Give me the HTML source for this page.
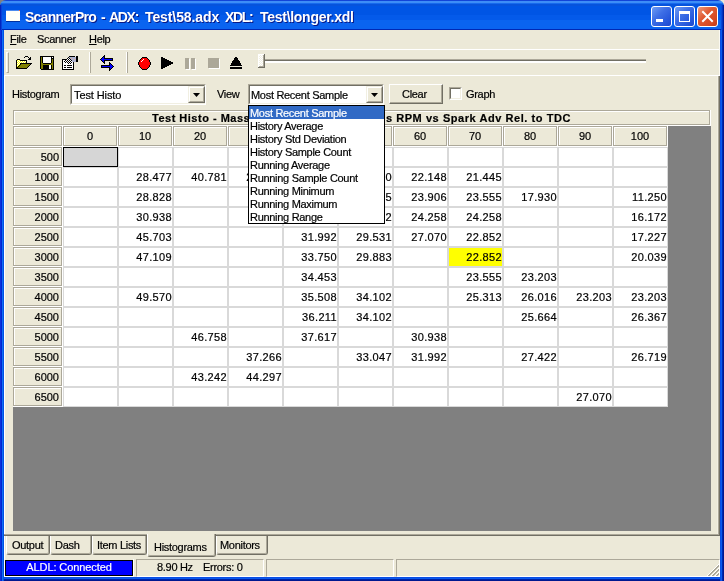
<!DOCTYPE html><html><head><meta charset="utf-8"><style>
*{margin:0;padding:0;box-sizing:border-box}
html,body{width:724px;height:581px;overflow:hidden}
body{position:relative;background:#ECE9D8;font-family:"Liberation Sans",sans-serif;font-size:11px;color:#000}
.t{position:absolute;white-space:nowrap;line-height:13px;letter-spacing:-0.3px;will-change:transform;-webkit-text-stroke:0.2px currentColor}
.n{position:absolute;white-space:nowrap;line-height:13px;will-change:transform;-webkit-text-stroke:0.2px currentColor}
</style></head><body>
<div style="position:absolute;left:0px;top:0px;width:8px;height:8px;background:#808080"></div>
<div style="position:absolute;left:0px;top:0px;width:724px;height:30px;background:linear-gradient(180deg,#1244D8 0px,#1244D8 1px,#3D8DF7 1px,#3D8DF7 3px,#166AEE 3px,#166AEE 4px,#0653DC 4px,#0653DC 6px,#0055E5 6px,#0055E5 15px,#045AEA 15px,#045AEA 20px,#0A64F0 20px,#0A64F0 29px,#0029B5 29px);border-radius:6px 6px 0 0"></div>
<div style="position:absolute;left:0px;top:30px;width:4px;height:551px;background:linear-gradient(90deg,#0A32DD 0,#0A32DD 1px,#0026D0 1px,#0026D0 2px,#1070F5 2px,#1070F5 3px,#0052E5 3px)"></div>
<div style="position:absolute;left:720px;top:30px;width:4px;height:551px;background:linear-gradient(90deg,#0A4EE4 0,#0A4EE4 1px,#0A5AEE 1px,#0A5AEE 2px,#0028B0 2px,#0028B0 3px,#001890 3px)"></div>
<div style="position:absolute;left:4px;top:577px;width:716px;height:4px;background:linear-gradient(180deg,#0A4EE4 0,#0A4EE4 1px,#0A5AEE 1px,#0A5AEE 2px,#0022A8 2px,#0022A8 3px,#001890 3px)"></div>
<div style="position:absolute;left:721px;top:5px;width:3px;height:25px;background:linear-gradient(90deg,#0A48D8 0,#0A48D8 1px,#0036C0 1px,#0036C0 2px,#001C98 2px)"></div>
<div style="position:absolute;left:0px;top:5px;width:2px;height:25px;background:linear-gradient(90deg,#0024C0 0,#0024C0 1px,#0A40D8 1px)"></div>
<div style="position:absolute;left:6px;top:10px;width:14px;height:1px;background:#4A8AEE"></div>
<div style="position:absolute;left:6px;top:11px;width:14px;height:10px;background:#FFFFF8"></div>
<div style="position:absolute;left:6px;top:21px;width:14px;height:1px;background:#0030A0"></div>
<div style="position:absolute;left:19px;top:10px;width:1px;height:1px;background:#F06030"></div>
<div style="position:absolute;left:25px;top:9px;font-weight:bold;font-size:14px;line-height:16px;color:#fff;white-space:nowrap;letter-spacing:-0.75px;will-change:transform;text-shadow:1px 1px #0A1883">ScannerPro</div>
<div style="position:absolute;left:101px;top:9px;font-weight:bold;font-size:14px;line-height:16px;color:#fff;white-space:nowrap;letter-spacing:0px;will-change:transform;text-shadow:1px 1px #0A1883">-</div>
<div style="position:absolute;left:109px;top:9px;font-weight:bold;font-size:14px;line-height:16px;color:#fff;white-space:nowrap;letter-spacing:-1.3px;will-change:transform;text-shadow:1px 1px #0A1883">ADX:</div>
<div style="position:absolute;left:145px;top:9px;font-weight:bold;font-size:14px;line-height:16px;color:#fff;white-space:nowrap;letter-spacing:-0.1px;will-change:transform;text-shadow:1px 1px #0A1883">Test\58.adx</div>
<div style="position:absolute;left:225px;top:9px;font-weight:bold;font-size:14px;line-height:16px;color:#fff;white-space:nowrap;letter-spacing:-1.3px;will-change:transform;text-shadow:1px 1px #0A1883">XDL:</div>
<div style="position:absolute;left:260px;top:9px;font-weight:bold;font-size:14px;line-height:16px;color:#fff;white-space:nowrap;letter-spacing:-0.28px;will-change:transform;text-shadow:1px 1px #0A1883">Test\longer.xdl</div>
<div style="position:absolute;left:651px;top:6px;width:21px;height:21px;border:1px solid #fff;border-radius:3px;background:linear-gradient(135deg,#6E9CF4 0%,#3E6FE6 40%,#2A5BDD 70%,#1C47CF 100%)"></div>
<div style="position:absolute;left:674px;top:6px;width:21px;height:21px;border:1px solid #fff;border-radius:3px;background:linear-gradient(135deg,#6E9CF4 0%,#3E6FE6 40%,#2A5BDD 70%,#1C47CF 100%)"></div>
<div style="position:absolute;left:697px;top:6px;width:21px;height:21px;border:1px solid #fff;border-radius:3px;background:linear-gradient(135deg,#EE9A7C 0%,#E05A32 40%,#D84A22 75%,#C03A18 100%)"></div>
<div style="position:absolute;left:656px;top:19px;width:7px;height:3px;background:#fff"></div>
<div style="position:absolute;left:679px;top:11px;width:11px;height:11px;border:1px solid #fff;border-top:3px solid #fff"></div>
<svg style="position:absolute;left:697px;top:6px" width="21" height="21"><path d="M6 6L15 15M15 6L6 15" stroke="#fff" stroke-width="2" stroke-linecap="square"/></svg>
<div class="t" style="left:10px;top:33px;"><u>F</u>ile</div>
<div class="t" style="left:37px;top:33px;">Scanner</div>
<div class="t" style="left:89px;top:33px;"><u>H</u>elp</div>
<div style="position:absolute;left:4px;top:49px;width:716px;height:1px;background:#fff"></div>
<div style="position:absolute;left:6px;top:52px;width:3px;height:21px;border-left:1px solid #fff;border-top:1px solid #fff;border-right:1px solid #ACA899;border-bottom:1px solid #ACA899"></div>
<div style="position:absolute;left:89px;top:52px;width:1px;height:21px;background:#fff"></div>
<div style="position:absolute;left:90px;top:52px;width:1px;height:21px;background:#ACA899"></div>
<div style="position:absolute;left:126px;top:52px;width:1px;height:21px;background:#fff"></div>
<div style="position:absolute;left:127px;top:52px;width:1px;height:21px;background:#ACA899"></div>
<div style="position:absolute;left:4px;top:75px;width:716px;height:1px;background:#fff"></div>
<svg style="position:absolute;left:16px;top:54px" width="16" height="15" shape-rendering="crispEdges"><rect x="9" y="2" width="3" height="1" fill="#000"/><rect x="8" y="3" width="1" height="1" fill="#000"/><rect x="12" y="3" width="1" height="1" fill="#000"/><rect x="14" y="3" width="1" height="1" fill="#000"/><rect x="13" y="4" width="2" height="1" fill="#000"/><rect x="1" y="5" width="3" height="1" fill="#000"/><rect x="12" y="5" width="3" height="1" fill="#000"/><rect x="0" y="6" width="1" height="1" fill="#000"/><rect x="1" y="6" width="1" height="1" fill="#FFFF00"/><rect x="2" y="6" width="1" height="1" fill="#FFFFFF"/><rect x="3" y="6" width="1" height="1" fill="#FFFF00"/><rect x="4" y="6" width="7" height="1" fill="#000"/><rect x="0" y="7" width="1" height="1" fill="#000"/><rect x="1" y="7" width="1" height="1" fill="#FFFFFF"/><rect x="2" y="7" width="1" height="1" fill="#FFFF00"/><rect x="3" y="7" width="1" height="1" fill="#FFFFFF"/><rect x="4" y="7" width="1" height="1" fill="#FFFF00"/><rect x="5" y="7" width="1" height="1" fill="#FFFFFF"/><rect x="6" y="7" width="1" height="1" fill="#FFFF00"/><rect x="7" y="7" width="1" height="1" fill="#FFFFFF"/><rect x="8" y="7" width="1" height="1" fill="#FFFF00"/><rect x="9" y="7" width="1" height="1" fill="#FFFFFF"/><rect x="10" y="7" width="1" height="1" fill="#000"/><rect x="0" y="8" width="1" height="1" fill="#000"/><rect x="1" y="8" width="1" height="1" fill="#FFFF00"/><rect x="2" y="8" width="1" height="1" fill="#FFFFFF"/><rect x="3" y="8" width="1" height="1" fill="#FFFF00"/><rect x="4" y="8" width="1" height="1" fill="#FFFFFF"/><rect x="5" y="8" width="1" height="1" fill="#FFFF00"/><rect x="6" y="8" width="1" height="1" fill="#FFFFFF"/><rect x="7" y="8" width="1" height="1" fill="#FFFF00"/><rect x="8" y="8" width="1" height="1" fill="#FFFFFF"/><rect x="9" y="8" width="1" height="1" fill="#FFFF00"/><rect x="10" y="8" width="1" height="1" fill="#000"/><rect x="0" y="9" width="1" height="1" fill="#000"/><rect x="1" y="9" width="1" height="1" fill="#FFFFFF"/><rect x="2" y="9" width="1" height="1" fill="#FFFF00"/><rect x="3" y="9" width="1" height="1" fill="#FFFFFF"/><rect x="4" y="9" width="12" height="1" fill="#000"/><rect x="0" y="10" width="1" height="1" fill="#000"/><rect x="1" y="10" width="1" height="1" fill="#FFFF00"/><rect x="2" y="10" width="1" height="1" fill="#FFFFFF"/><rect x="3" y="10" width="1" height="1" fill="#FFFF00"/><rect x="4" y="10" width="1" height="1" fill="#000"/><rect x="5" y="10" width="9" height="1" fill="#808000"/><rect x="14" y="10" width="1" height="1" fill="#000"/><rect x="0" y="11" width="1" height="1" fill="#000"/><rect x="1" y="11" width="1" height="1" fill="#FFFFFF"/><rect x="2" y="11" width="1" height="1" fill="#FFFF00"/><rect x="3" y="11" width="1" height="1" fill="#000"/><rect x="4" y="11" width="9" height="1" fill="#808000"/><rect x="13" y="11" width="1" height="1" fill="#000"/><rect x="0" y="12" width="1" height="1" fill="#000"/><rect x="1" y="12" width="1" height="1" fill="#FFFF00"/><rect x="2" y="12" width="1" height="1" fill="#000"/><rect x="3" y="12" width="9" height="1" fill="#808000"/><rect x="12" y="12" width="1" height="1" fill="#000"/><rect x="0" y="13" width="2" height="1" fill="#000"/><rect x="2" y="13" width="9" height="1" fill="#808000"/><rect x="11" y="13" width="1" height="1" fill="#000"/><rect x="0" y="14" width="11" height="1" fill="#000"/></svg>
<svg style="position:absolute;left:39px;top:54px" width="16" height="16" shape-rendering="crispEdges"><rect x="1" y="2" width="14" height="1" fill="#000"/><rect x="1" y="3" width="1" height="1" fill="#000"/><rect x="2" y="3" width="1" height="1" fill="#808000"/><rect x="3" y="3" width="1" height="1" fill="#000"/><rect x="4" y="3" width="8" height="1" fill="#FFFFFF"/><rect x="12" y="3" width="1" height="1" fill="#000"/><rect x="13" y="3" width="1" height="1" fill="#FFFFFF"/><rect x="14" y="3" width="1" height="1" fill="#000"/><rect x="1" y="4" width="1" height="1" fill="#000"/><rect x="2" y="4" width="1" height="1" fill="#808000"/><rect x="3" y="4" width="1" height="1" fill="#000"/><rect x="4" y="4" width="8" height="1" fill="#FFFFFF"/><rect x="12" y="4" width="3" height="1" fill="#000"/><rect x="1" y="5" width="1" height="1" fill="#000"/><rect x="2" y="5" width="1" height="1" fill="#808000"/><rect x="3" y="5" width="1" height="1" fill="#000"/><rect x="4" y="5" width="8" height="1" fill="#FFFFFF"/><rect x="12" y="5" width="1" height="1" fill="#000"/><rect x="13" y="5" width="1" height="1" fill="#808000"/><rect x="14" y="5" width="1" height="1" fill="#000"/><rect x="1" y="6" width="1" height="1" fill="#000"/><rect x="2" y="6" width="1" height="1" fill="#808000"/><rect x="3" y="6" width="1" height="1" fill="#000"/><rect x="4" y="6" width="8" height="1" fill="#FFFFFF"/><rect x="12" y="6" width="1" height="1" fill="#000"/><rect x="13" y="6" width="1" height="1" fill="#808000"/><rect x="14" y="6" width="1" height="1" fill="#000"/><rect x="1" y="7" width="1" height="1" fill="#000"/><rect x="2" y="7" width="1" height="1" fill="#808000"/><rect x="3" y="7" width="1" height="1" fill="#000"/><rect x="4" y="7" width="8" height="1" fill="#FFFFFF"/><rect x="12" y="7" width="1" height="1" fill="#000"/><rect x="13" y="7" width="1" height="1" fill="#808000"/><rect x="14" y="7" width="1" height="1" fill="#000"/><rect x="1" y="8" width="1" height="1" fill="#000"/><rect x="2" y="8" width="1" height="1" fill="#808000"/><rect x="3" y="8" width="1" height="1" fill="#000"/><rect x="4" y="8" width="8" height="1" fill="#FFFFFF"/><rect x="12" y="8" width="1" height="1" fill="#000"/><rect x="13" y="8" width="1" height="1" fill="#808000"/><rect x="14" y="8" width="1" height="1" fill="#000"/><rect x="1" y="9" width="1" height="1" fill="#000"/><rect x="2" y="9" width="2" height="1" fill="#808000"/><rect x="4" y="9" width="8" height="1" fill="#000"/><rect x="12" y="9" width="2" height="1" fill="#808000"/><rect x="14" y="9" width="1" height="1" fill="#000"/><rect x="1" y="10" width="1" height="1" fill="#000"/><rect x="2" y="10" width="12" height="1" fill="#808000"/><rect x="14" y="10" width="1" height="1" fill="#000"/><rect x="1" y="11" width="1" height="1" fill="#000"/><rect x="2" y="11" width="2" height="1" fill="#808000"/><rect x="4" y="11" width="6" height="1" fill="#000"/><rect x="10" y="11" width="2" height="1" fill="#FFFFFF"/><rect x="12" y="11" width="1" height="1" fill="#000"/><rect x="13" y="11" width="1" height="1" fill="#808000"/><rect x="14" y="11" width="1" height="1" fill="#000"/><rect x="1" y="12" width="1" height="1" fill="#000"/><rect x="2" y="12" width="2" height="1" fill="#808000"/><rect x="4" y="12" width="6" height="1" fill="#000"/><rect x="10" y="12" width="2" height="1" fill="#FFFFFF"/><rect x="12" y="12" width="1" height="1" fill="#000"/><rect x="13" y="12" width="1" height="1" fill="#808000"/><rect x="14" y="12" width="1" height="1" fill="#000"/><rect x="1" y="13" width="1" height="1" fill="#000"/><rect x="2" y="13" width="2" height="1" fill="#808000"/><rect x="4" y="13" width="6" height="1" fill="#000"/><rect x="10" y="13" width="2" height="1" fill="#FFFFFF"/><rect x="12" y="13" width="1" height="1" fill="#000"/><rect x="13" y="13" width="1" height="1" fill="#808000"/><rect x="14" y="13" width="1" height="1" fill="#000"/><rect x="1" y="14" width="1" height="1" fill="#000"/><rect x="2" y="14" width="2" height="1" fill="#808000"/><rect x="4" y="14" width="6" height="1" fill="#000"/><rect x="10" y="14" width="2" height="1" fill="#FFFFFF"/><rect x="12" y="14" width="1" height="1" fill="#000"/><rect x="13" y="14" width="1" height="1" fill="#808000"/><rect x="14" y="14" width="1" height="1" fill="#000"/><rect x="2" y="15" width="13" height="1" fill="#000"/></svg>
<svg style="position:absolute;left:61px;top:55px" width="18" height="15" shape-rendering="crispEdges"><rect x="8" y="1" width="6" height="1" fill="#000"/><rect x="15" y="1" width="2" height="1" fill="#000"/><rect x="7" y="2" width="1" height="1" fill="#000"/><rect x="8" y="2" width="7" height="1" fill="#ADB3CF"/><rect x="15" y="2" width="2" height="1" fill="#000"/><rect x="6" y="3" width="1" height="1" fill="#000"/><rect x="7" y="3" width="1" height="1" fill="#FFFFFF"/><rect x="8" y="3" width="1" height="1" fill="#000"/><rect x="9" y="3" width="1" height="1" fill="#ADB3CF"/><rect x="10" y="3" width="1" height="1" fill="#E8A890"/><rect x="11" y="3" width="4" height="1" fill="#ADB3CF"/><rect x="15" y="3" width="2" height="1" fill="#000"/><rect x="1" y="4" width="5" height="1" fill="#000"/><rect x="6" y="4" width="1" height="1" fill="#FFFFFF"/><rect x="7" y="4" width="1" height="1" fill="#000"/><rect x="8" y="4" width="1" height="1" fill="#FFFFFF"/><rect x="9" y="4" width="1" height="1" fill="#000"/><rect x="10" y="4" width="3" height="1" fill="#ADB3CF"/><rect x="13" y="4" width="1" height="1" fill="#E8A890"/><rect x="14" y="4" width="1" height="1" fill="#ADB3CF"/><rect x="15" y="4" width="2" height="1" fill="#000"/><rect x="1" y="5" width="1" height="1" fill="#000"/><rect x="2" y="5" width="2" height="1" fill="#FFFFFF"/><rect x="4" y="5" width="1" height="1" fill="#000"/><rect x="5" y="5" width="1" height="1" fill="#FFFFFF"/><rect x="6" y="5" width="1" height="1" fill="#000"/><rect x="7" y="5" width="1" height="1" fill="#FFFFFF"/><rect x="8" y="5" width="1" height="1" fill="#000"/><rect x="9" y="5" width="1" height="1" fill="#FFFFFF"/><rect x="10" y="5" width="1" height="1" fill="#000"/><rect x="11" y="5" width="4" height="1" fill="#ADB3CF"/><rect x="15" y="5" width="2" height="1" fill="#000"/><rect x="1" y="6" width="1" height="1" fill="#000"/><rect x="2" y="6" width="1" height="1" fill="#FFFFFF"/><rect x="3" y="6" width="1" height="1" fill="#000"/><rect x="4" y="6" width="1" height="1" fill="#FFFFFF"/><rect x="5" y="6" width="1" height="1" fill="#000"/><rect x="6" y="6" width="1" height="1" fill="#FFFFFF"/><rect x="7" y="6" width="1" height="1" fill="#000"/><rect x="8" y="6" width="1" height="1" fill="#FFFFFF"/><rect x="9" y="6" width="1" height="1" fill="#000"/><rect x="10" y="6" width="1" height="1" fill="#FFFFFF"/><rect x="11" y="6" width="4" height="1" fill="#ADB3CF"/><rect x="15" y="6" width="2" height="1" fill="#000"/><rect x="1" y="7" width="1" height="1" fill="#000"/><rect x="2" y="7" width="2" height="1" fill="#FFFFFF"/><rect x="4" y="7" width="1" height="1" fill="#000"/><rect x="5" y="7" width="1" height="1" fill="#FFFFFF"/><rect x="6" y="7" width="1" height="1" fill="#000"/><rect x="7" y="7" width="1" height="1" fill="#FFFFFF"/><rect x="8" y="7" width="1" height="1" fill="#000"/><rect x="9" y="7" width="1" height="1" fill="#FFFFFF"/><rect x="10" y="7" width="1" height="1" fill="#000"/><rect x="11" y="7" width="1" height="1" fill="#FFFFFF"/><rect x="12" y="7" width="1" height="1" fill="#000"/><rect x="1" y="8" width="1" height="1" fill="#000"/><rect x="2" y="8" width="5" height="1" fill="#FFFFFF"/><rect x="7" y="8" width="1" height="1" fill="#000"/><rect x="8" y="8" width="1" height="1" fill="#FFFFFF"/><rect x="9" y="8" width="1" height="1" fill="#000"/><rect x="10" y="8" width="2" height="1" fill="#FFFFFF"/><rect x="12" y="8" width="1" height="1" fill="#000"/><rect x="1" y="9" width="1" height="1" fill="#000"/><rect x="2" y="9" width="10" height="1" fill="#FFFFFF"/><rect x="12" y="9" width="1" height="1" fill="#000"/><rect x="1" y="10" width="1" height="1" fill="#000"/><rect x="2" y="10" width="1" height="1" fill="#FFFFFF"/><rect x="3" y="10" width="2" height="1" fill="#000"/><rect x="5" y="10" width="1" height="1" fill="#FFFFFF"/><rect x="6" y="10" width="5" height="1" fill="#000"/><rect x="11" y="10" width="1" height="1" fill="#FFFFFF"/><rect x="12" y="10" width="1" height="1" fill="#000"/><rect x="1" y="11" width="1" height="1" fill="#000"/><rect x="2" y="11" width="10" height="1" fill="#FFFFFF"/><rect x="12" y="11" width="1" height="1" fill="#000"/><rect x="1" y="12" width="1" height="1" fill="#000"/><rect x="2" y="12" width="1" height="1" fill="#FFFFFF"/><rect x="3" y="12" width="2" height="1" fill="#000"/><rect x="5" y="12" width="1" height="1" fill="#FFFFFF"/><rect x="6" y="12" width="5" height="1" fill="#000"/><rect x="11" y="12" width="1" height="1" fill="#FFFFFF"/><rect x="12" y="12" width="1" height="1" fill="#000"/><rect x="1" y="13" width="1" height="1" fill="#000"/><rect x="2" y="13" width="10" height="1" fill="#FFFFFF"/><rect x="12" y="13" width="1" height="1" fill="#000"/><rect x="1" y="14" width="12" height="1" fill="#000"/></svg>
<svg style="position:absolute;left:98px;top:53px" width="18" height="18" shape-rendering="crispEdges"><rect x="6" y="2" width="1" height="1" fill="#000"/><rect x="5" y="3" width="2" height="1" fill="#000"/><rect x="4" y="4" width="1" height="1" fill="#000"/><rect x="5" y="4" width="1" height="1" fill="#0000FF"/><rect x="6" y="4" width="1" height="1" fill="#000"/><rect x="3" y="5" width="1" height="1" fill="#000"/><rect x="4" y="5" width="2" height="1" fill="#0000FF"/><rect x="6" y="5" width="9" height="1" fill="#000"/><rect x="2" y="6" width="1" height="1" fill="#000"/><rect x="3" y="6" width="11" height="1" fill="#0000FF"/><rect x="14" y="6" width="1" height="1" fill="#000"/><rect x="3" y="7" width="1" height="1" fill="#000"/><rect x="4" y="7" width="2" height="1" fill="#0000FF"/><rect x="6" y="7" width="9" height="1" fill="#000"/><rect x="4" y="8" width="1" height="1" fill="#000"/><rect x="5" y="8" width="1" height="1" fill="#0000FF"/><rect x="6" y="8" width="1" height="1" fill="#000"/><rect x="5" y="9" width="2" height="1" fill="#000"/><rect x="11" y="9" width="1" height="1" fill="#000"/><rect x="6" y="10" width="1" height="1" fill="#000"/><rect x="11" y="10" width="2" height="1" fill="#000"/><rect x="11" y="11" width="1" height="1" fill="#000"/><rect x="12" y="11" width="1" height="1" fill="#0000FF"/><rect x="13" y="11" width="1" height="1" fill="#000"/><rect x="3" y="12" width="9" height="1" fill="#000"/><rect x="12" y="12" width="2" height="1" fill="#0000FF"/><rect x="14" y="12" width="1" height="1" fill="#000"/><rect x="3" y="13" width="1" height="1" fill="#000"/><rect x="4" y="13" width="11" height="1" fill="#0000FF"/><rect x="15" y="13" width="1" height="1" fill="#000"/><rect x="3" y="14" width="9" height="1" fill="#000"/><rect x="12" y="14" width="2" height="1" fill="#0000FF"/><rect x="14" y="14" width="1" height="1" fill="#000"/><rect x="11" y="15" width="1" height="1" fill="#000"/><rect x="12" y="15" width="1" height="1" fill="#0000FF"/><rect x="13" y="15" width="1" height="1" fill="#000"/><rect x="11" y="16" width="2" height="1" fill="#000"/><rect x="11" y="17" width="1" height="1" fill="#000"/></svg>
<svg style="position:absolute;left:136px;top:55px" width="18" height="15" shape-rendering="crispEdges"><rect x="6" y="2" width="5" height="1" fill="#000"/><rect x="5" y="3" width="1" height="1" fill="#000"/><rect x="6" y="3" width="5" height="1" fill="#FF0000"/><rect x="11" y="3" width="1" height="1" fill="#000"/><rect x="4" y="4" width="1" height="1" fill="#000"/><rect x="5" y="4" width="2" height="1" fill="#FF0000"/><rect x="7" y="4" width="1" height="1" fill="#FFFFFF"/><rect x="8" y="4" width="4" height="1" fill="#FF0000"/><rect x="12" y="4" width="1" height="1" fill="#000"/><rect x="3" y="5" width="1" height="1" fill="#000"/><rect x="4" y="5" width="2" height="1" fill="#FF0000"/><rect x="6" y="5" width="1" height="1" fill="#FFFFFF"/><rect x="7" y="5" width="6" height="1" fill="#FF0000"/><rect x="13" y="5" width="1" height="1" fill="#000"/><rect x="3" y="6" width="1" height="1" fill="#000"/><rect x="4" y="6" width="1" height="1" fill="#FF0000"/><rect x="5" y="6" width="1" height="1" fill="#FFFFFF"/><rect x="6" y="6" width="7" height="1" fill="#FF0000"/><rect x="13" y="6" width="1" height="1" fill="#000"/><rect x="2" y="7" width="1" height="1" fill="#000"/><rect x="3" y="7" width="11" height="1" fill="#FF0000"/><rect x="14" y="7" width="1" height="1" fill="#000"/><rect x="2" y="8" width="1" height="1" fill="#000"/><rect x="3" y="8" width="11" height="1" fill="#FF0000"/><rect x="14" y="8" width="1" height="1" fill="#000"/><rect x="2" y="9" width="1" height="1" fill="#000"/><rect x="3" y="9" width="11" height="1" fill="#FF0000"/><rect x="14" y="9" width="1" height="1" fill="#000"/><rect x="3" y="10" width="1" height="1" fill="#000"/><rect x="4" y="10" width="9" height="1" fill="#FF0000"/><rect x="13" y="10" width="1" height="1" fill="#000"/><rect x="3" y="11" width="1" height="1" fill="#000"/><rect x="4" y="11" width="9" height="1" fill="#FF0000"/><rect x="13" y="11" width="1" height="1" fill="#000"/><rect x="4" y="12" width="1" height="1" fill="#000"/><rect x="5" y="12" width="7" height="1" fill="#FF0000"/><rect x="12" y="12" width="1" height="1" fill="#000"/><rect x="5" y="13" width="1" height="1" fill="#000"/><rect x="6" y="13" width="5" height="1" fill="#FF0000"/><rect x="11" y="13" width="1" height="1" fill="#000"/><rect x="6" y="14" width="5" height="1" fill="#000"/></svg>
<svg style="position:absolute;left:158px;top:55px" width="18" height="14" shape-rendering="crispEdges"><rect x="3" y="2" width="2" height="1" fill="#000"/><rect x="3" y="3" width="4" height="1" fill="#000"/><rect x="3" y="4" width="6" height="1" fill="#000"/><rect x="3" y="5" width="8" height="1" fill="#000"/><rect x="3" y="6" width="10" height="1" fill="#000"/><rect x="3" y="7" width="12" height="1" fill="#000"/><rect x="3" y="8" width="12" height="1" fill="#000"/><rect x="3" y="9" width="10" height="1" fill="#000"/><rect x="3" y="10" width="8" height="1" fill="#000"/><rect x="3" y="11" width="6" height="1" fill="#000"/><rect x="3" y="12" width="4" height="1" fill="#000"/><rect x="3" y="13" width="2" height="1" fill="#000"/></svg>
<svg style="position:absolute;left:180px;top:55px" width="18" height="15" shape-rendering="crispEdges"><rect x="5" y="3" width="4" height="1" fill="#ACA899"/><rect x="11" y="3" width="4" height="1" fill="#ACA899"/><rect x="5" y="4" width="4" height="1" fill="#ACA899"/><rect x="9" y="4" width="1" height="1" fill="#FFFFFF"/><rect x="11" y="4" width="4" height="1" fill="#ACA899"/><rect x="15" y="4" width="1" height="1" fill="#FFFFFF"/><rect x="5" y="5" width="4" height="1" fill="#ACA899"/><rect x="9" y="5" width="1" height="1" fill="#FFFFFF"/><rect x="11" y="5" width="4" height="1" fill="#ACA899"/><rect x="15" y="5" width="1" height="1" fill="#FFFFFF"/><rect x="5" y="6" width="4" height="1" fill="#ACA899"/><rect x="9" y="6" width="1" height="1" fill="#FFFFFF"/><rect x="11" y="6" width="4" height="1" fill="#ACA899"/><rect x="15" y="6" width="1" height="1" fill="#FFFFFF"/><rect x="5" y="7" width="4" height="1" fill="#ACA899"/><rect x="9" y="7" width="1" height="1" fill="#FFFFFF"/><rect x="11" y="7" width="4" height="1" fill="#ACA899"/><rect x="15" y="7" width="1" height="1" fill="#FFFFFF"/><rect x="5" y="8" width="4" height="1" fill="#ACA899"/><rect x="9" y="8" width="1" height="1" fill="#FFFFFF"/><rect x="11" y="8" width="4" height="1" fill="#ACA899"/><rect x="15" y="8" width="1" height="1" fill="#FFFFFF"/><rect x="5" y="9" width="4" height="1" fill="#ACA899"/><rect x="9" y="9" width="1" height="1" fill="#FFFFFF"/><rect x="11" y="9" width="4" height="1" fill="#ACA899"/><rect x="15" y="9" width="1" height="1" fill="#FFFFFF"/><rect x="5" y="10" width="4" height="1" fill="#ACA899"/><rect x="9" y="10" width="1" height="1" fill="#FFFFFF"/><rect x="11" y="10" width="4" height="1" fill="#ACA899"/><rect x="15" y="10" width="1" height="1" fill="#FFFFFF"/><rect x="5" y="11" width="4" height="1" fill="#ACA899"/><rect x="9" y="11" width="1" height="1" fill="#FFFFFF"/><rect x="11" y="11" width="4" height="1" fill="#ACA899"/><rect x="15" y="11" width="1" height="1" fill="#FFFFFF"/><rect x="5" y="12" width="4" height="1" fill="#ACA899"/><rect x="9" y="12" width="1" height="1" fill="#FFFFFF"/><rect x="11" y="12" width="4" height="1" fill="#ACA899"/><rect x="15" y="12" width="1" height="1" fill="#FFFFFF"/><rect x="5" y="13" width="4" height="1" fill="#ACA899"/><rect x="9" y="13" width="1" height="1" fill="#FFFFFF"/><rect x="11" y="13" width="4" height="1" fill="#ACA899"/><rect x="15" y="13" width="1" height="1" fill="#FFFFFF"/><rect x="6" y="14" width="4" height="1" fill="#FFFFFF"/><rect x="12" y="14" width="4" height="1" fill="#FFFFFF"/></svg>
<svg style="position:absolute;left:204px;top:55px" width="18" height="14" shape-rendering="crispEdges"><rect x="4" y="3" width="11" height="1" fill="#ACA899"/><rect x="4" y="4" width="11" height="1" fill="#ACA899"/><rect x="15" y="4" width="1" height="1" fill="#FFFFFF"/><rect x="4" y="5" width="11" height="1" fill="#ACA899"/><rect x="15" y="5" width="1" height="1" fill="#FFFFFF"/><rect x="4" y="6" width="11" height="1" fill="#ACA899"/><rect x="15" y="6" width="1" height="1" fill="#FFFFFF"/><rect x="4" y="7" width="11" height="1" fill="#ACA899"/><rect x="15" y="7" width="1" height="1" fill="#FFFFFF"/><rect x="4" y="8" width="11" height="1" fill="#ACA899"/><rect x="15" y="8" width="1" height="1" fill="#FFFFFF"/><rect x="4" y="9" width="11" height="1" fill="#ACA899"/><rect x="15" y="9" width="1" height="1" fill="#FFFFFF"/><rect x="4" y="10" width="11" height="1" fill="#ACA899"/><rect x="15" y="10" width="1" height="1" fill="#FFFFFF"/><rect x="4" y="11" width="11" height="1" fill="#ACA899"/><rect x="15" y="11" width="1" height="1" fill="#FFFFFF"/><rect x="4" y="12" width="11" height="1" fill="#ACA899"/><rect x="15" y="12" width="1" height="1" fill="#FFFFFF"/><rect x="5" y="13" width="11" height="1" fill="#FFFFFF"/></svg>
<svg style="position:absolute;left:227px;top:54px" width="18" height="15" shape-rendering="crispEdges"><rect x="8" y="3" width="2" height="1" fill="#000"/><rect x="7" y="4" width="4" height="1" fill="#000"/><rect x="7" y="5" width="4" height="1" fill="#000"/><rect x="6" y="6" width="6" height="1" fill="#000"/><rect x="5" y="7" width="8" height="1" fill="#000"/><rect x="5" y="8" width="8" height="1" fill="#000"/><rect x="4" y="9" width="10" height="1" fill="#000"/><rect x="4" y="10" width="10" height="1" fill="#000"/><rect x="3" y="11" width="12" height="1" fill="#000"/><rect x="3" y="13" width="12" height="1" fill="#000"/><rect x="3" y="14" width="12" height="1" fill="#000"/></svg>
<div style="position:absolute;left:4px;top:75px;width:1px;height:502px;background:#fff"></div>
<div class="t" style="left:12px;top:88px;">Histogram</div>
<div style="position:absolute;left:70px;top:84px;width:136px;height:21px;background:#fff;border-top:1px solid #ACA899;border-left:1px solid #ACA899;border-right:1px solid #fff;border-bottom:1px solid #fff"></div>
<div style="position:absolute;left:71px;top:85px;width:134px;height:19px;border-top:1px solid #716F64;border-left:1px solid #716F64;border-right:1px solid #F1EFE2;border-bottom:1px solid #F1EFE2"></div>
<div class="t" style="left:74px;top:89px;letter-spacing:-0.1px">Test Histo</div>
<div style="position:absolute;left:188px;top:86px;width:17px;height:17px;background:#ECE9D8;border-top:1px solid #F1EFE2;border-left:1px solid #F1EFE2;border-right:1px solid #716F64;border-bottom:1px solid #716F64"></div>
<div style="position:absolute;left:189px;top:87px;width:15px;height:15px;border-top:1px solid #fff;border-left:1px solid #fff;border-right:1px solid #ACA899;border-bottom:1px solid #ACA899"></div>
<svg style="position:absolute;left:193px;top:93px" width="7" height="4"><path d="M0 0H7L3.5 4Z" fill="#000"/></svg>
<div class="t" style="left:217px;top:88px;">View</div>
<div style="position:absolute;left:248px;top:84px;width:136px;height:21px;background:#fff;border-top:1px solid #ACA899;border-left:1px solid #ACA899;border-right:1px solid #fff;border-bottom:1px solid #fff"></div>
<div style="position:absolute;left:249px;top:85px;width:134px;height:19px;border-top:1px solid #716F64;border-left:1px solid #716F64;border-right:1px solid #F1EFE2;border-bottom:1px solid #F1EFE2"></div>
<div class="t" style="left:251px;top:89px;">Most Recent Sample</div>
<div style="position:absolute;left:366px;top:86px;width:17px;height:17px;background:#ECE9D8;border-top:1px solid #F1EFE2;border-left:1px solid #F1EFE2;border-right:1px solid #716F64;border-bottom:1px solid #716F64"></div>
<div style="position:absolute;left:367px;top:87px;width:15px;height:15px;border-top:1px solid #fff;border-left:1px solid #fff;border-right:1px solid #ACA899;border-bottom:1px solid #ACA899"></div>
<svg style="position:absolute;left:371px;top:93px" width="7" height="4"><path d="M0 0H7L3.5 4Z" fill="#000"/></svg>
<div style="position:absolute;left:389px;top:84px;width:54px;height:20px;background:#ECE9D8;border-top:1px solid #fff;border-left:1px solid #fff;border-right:1px solid #716F64;border-bottom:1px solid #716F64"></div>
<div style="position:absolute;left:390px;top:85px;width:52px;height:18px;border-right:1px solid #ACA899;border-bottom:1px solid #ACA899"></div>
<div class="t" style="left:402px;top:88px;">Clear</div>
<div style="position:absolute;left:449px;top:87px;width:13px;height:13px;background:#fff;border-top:1px solid #ACA899;border-left:1px solid #ACA899;border-right:1px solid #fff;border-bottom:1px solid #fff"></div>
<div style="position:absolute;left:450px;top:88px;width:11px;height:11px;border-top:1px solid #716F64;border-left:1px solid #716F64;border-right:1px solid #F1EFE2;border-bottom:1px solid #F1EFE2"></div>
<div class="t" style="left:466px;top:88px;">Graph</div>
<div style="position:absolute;left:13px;top:110px;width:698px;height:421px;background:#808080"></div>
<div style="position:absolute;left:13px;top:110px;width:698px;height:16px;background:#fff"></div>
<div style="position:absolute;left:13px;top:126px;width:655px;height:281px;background:#fff"></div>
<div style="position:absolute;left:13px;top:110px;width:697px;height:15px;background:#ECE9D8;border:1px solid #ACA899;box-shadow:inset 1px 1px #fff"></div>
<div class="n" style="left:152px;top:112px;font-weight:bold;letter-spacing:0.5px">Test Histo - Mass Air Flow</div>
<div class="n" style="left:388px;top:112px;width:183px;font-weight:bold;letter-spacing:0.56px;text-align:right;direction:rtl"><span style="direction:ltr;unicode-bidi:bidi-override">s RPM vs Spark Adv Rel. to TDC</span></div>
<div style="position:absolute;left:13px;top:126px;width:49px;height:20px;background:#ECE9D8;border:1px solid #ACA899;box-shadow:inset 1px 1px #fff"></div>
<div style="position:absolute;left:63px;top:126px;width:54px;height:20px;background:#ECE9D8;border:1px solid #ACA899;box-shadow:inset 1px 1px #fff"></div>
<div class="n" style="left:63px;top:130px;width:54px;text-align:center">0</div>
<div style="position:absolute;left:118px;top:126px;width:54px;height:20px;background:#ECE9D8;border:1px solid #ACA899;box-shadow:inset 1px 1px #fff"></div>
<div class="n" style="left:118px;top:130px;width:54px;text-align:center">10</div>
<div style="position:absolute;left:173px;top:126px;width:54px;height:20px;background:#ECE9D8;border:1px solid #ACA899;box-shadow:inset 1px 1px #fff"></div>
<div class="n" style="left:173px;top:130px;width:54px;text-align:center">20</div>
<div style="position:absolute;left:228px;top:126px;width:54px;height:20px;background:#ECE9D8;border:1px solid #ACA899;box-shadow:inset 1px 1px #fff"></div>
<div class="n" style="left:228px;top:130px;width:54px;text-align:center">30</div>
<div style="position:absolute;left:283px;top:126px;width:54px;height:20px;background:#ECE9D8;border:1px solid #ACA899;box-shadow:inset 1px 1px #fff"></div>
<div class="n" style="left:283px;top:130px;width:54px;text-align:center">40</div>
<div style="position:absolute;left:338px;top:126px;width:54px;height:20px;background:#ECE9D8;border:1px solid #ACA899;box-shadow:inset 1px 1px #fff"></div>
<div class="n" style="left:338px;top:130px;width:54px;text-align:center">50</div>
<div style="position:absolute;left:393px;top:126px;width:54px;height:20px;background:#ECE9D8;border:1px solid #ACA899;box-shadow:inset 1px 1px #fff"></div>
<div class="n" style="left:393px;top:130px;width:54px;text-align:center">60</div>
<div style="position:absolute;left:448px;top:126px;width:54px;height:20px;background:#ECE9D8;border:1px solid #ACA899;box-shadow:inset 1px 1px #fff"></div>
<div class="n" style="left:448px;top:130px;width:54px;text-align:center">70</div>
<div style="position:absolute;left:503px;top:126px;width:54px;height:20px;background:#ECE9D8;border:1px solid #ACA899;box-shadow:inset 1px 1px #fff"></div>
<div class="n" style="left:503px;top:130px;width:54px;text-align:center">80</div>
<div style="position:absolute;left:558px;top:126px;width:54px;height:20px;background:#ECE9D8;border:1px solid #ACA899;box-shadow:inset 1px 1px #fff"></div>
<div class="n" style="left:558px;top:130px;width:54px;text-align:center">90</div>
<div style="position:absolute;left:613px;top:126px;width:54px;height:20px;background:#ECE9D8;border:1px solid #ACA899;box-shadow:inset 1px 1px #fff"></div>
<div class="n" style="left:613px;top:130px;width:54px;text-align:center">100</div>
<div style="position:absolute;left:13px;top:147px;width:49px;height:19px;background:#ECE9D8;border:1px solid #ACA899;box-shadow:inset 1px 1px #fff"></div>
<div class="n" style="left:13px;top:151px;width:46px;text-align:right">500</div>
<div style="position:absolute;left:63px;top:147px;width:55px;height:20px;border:1px solid #000;background:#D6D6D6"></div>
<div style="position:absolute;left:118px;top:147px;width:55px;height:20px;border:1px solid #D9D9D9"></div>
<div style="position:absolute;left:173px;top:147px;width:55px;height:20px;border:1px solid #D9D9D9"></div>
<div style="position:absolute;left:228px;top:147px;width:55px;height:20px;border:1px solid #D9D9D9"></div>
<div style="position:absolute;left:283px;top:147px;width:55px;height:20px;border:1px solid #D9D9D9"></div>
<div style="position:absolute;left:338px;top:147px;width:55px;height:20px;border:1px solid #D9D9D9"></div>
<div style="position:absolute;left:393px;top:147px;width:55px;height:20px;border:1px solid #D9D9D9"></div>
<div style="position:absolute;left:448px;top:147px;width:55px;height:20px;border:1px solid #D9D9D9"></div>
<div style="position:absolute;left:503px;top:147px;width:55px;height:20px;border:1px solid #D9D9D9"></div>
<div style="position:absolute;left:558px;top:147px;width:55px;height:20px;border:1px solid #D9D9D9"></div>
<div style="position:absolute;left:613px;top:147px;width:55px;height:20px;border:1px solid #D9D9D9"></div>
<div style="position:absolute;left:13px;top:167px;width:49px;height:19px;background:#ECE9D8;border:1px solid #ACA899;box-shadow:inset 1px 1px #fff"></div>
<div class="n" style="left:13px;top:171px;width:46px;text-align:right">1000</div>
<div style="position:absolute;left:63px;top:167px;width:55px;height:20px;border:1px solid #D9D9D9"></div>
<div style="position:absolute;left:118px;top:167px;width:55px;height:20px;border:1px solid #D9D9D9"></div>
<div class="n" style="left:118px;top:171px;width:54px;text-align:right;letter-spacing:0.35px">28.477</div>
<div style="position:absolute;left:173px;top:167px;width:55px;height:20px;border:1px solid #D9D9D9"></div>
<div class="n" style="left:173px;top:171px;width:54px;text-align:right;letter-spacing:0.35px">40.781</div>
<div style="position:absolute;left:228px;top:167px;width:55px;height:20px;border:1px solid #D9D9D9"></div>
<div class="n" style="left:228px;top:171px;width:54px;text-align:right;letter-spacing:0.35px">27.422</div>
<div style="position:absolute;left:283px;top:167px;width:55px;height:20px;border:1px solid #D9D9D9"></div>
<div style="position:absolute;left:338px;top:167px;width:55px;height:20px;border:1px solid #D9D9D9"></div>
<div class="n" style="left:338px;top:171px;width:54px;text-align:right;letter-spacing:0.35px">33.750</div>
<div style="position:absolute;left:393px;top:167px;width:55px;height:20px;border:1px solid #D9D9D9"></div>
<div class="n" style="left:393px;top:171px;width:54px;text-align:right;letter-spacing:0.35px">22.148</div>
<div style="position:absolute;left:448px;top:167px;width:55px;height:20px;border:1px solid #D9D9D9"></div>
<div class="n" style="left:448px;top:171px;width:54px;text-align:right;letter-spacing:0.35px">21.445</div>
<div style="position:absolute;left:503px;top:167px;width:55px;height:20px;border:1px solid #D9D9D9"></div>
<div style="position:absolute;left:558px;top:167px;width:55px;height:20px;border:1px solid #D9D9D9"></div>
<div style="position:absolute;left:613px;top:167px;width:55px;height:20px;border:1px solid #D9D9D9"></div>
<div style="position:absolute;left:13px;top:187px;width:49px;height:19px;background:#ECE9D8;border:1px solid #ACA899;box-shadow:inset 1px 1px #fff"></div>
<div class="n" style="left:13px;top:191px;width:46px;text-align:right">1500</div>
<div style="position:absolute;left:63px;top:187px;width:55px;height:20px;border:1px solid #D9D9D9"></div>
<div style="position:absolute;left:118px;top:187px;width:55px;height:20px;border:1px solid #D9D9D9"></div>
<div class="n" style="left:118px;top:191px;width:54px;text-align:right;letter-spacing:0.35px">28.828</div>
<div style="position:absolute;left:173px;top:187px;width:55px;height:20px;border:1px solid #D9D9D9"></div>
<div style="position:absolute;left:228px;top:187px;width:55px;height:20px;border:1px solid #D9D9D9"></div>
<div style="position:absolute;left:283px;top:187px;width:55px;height:20px;border:1px solid #D9D9D9"></div>
<div style="position:absolute;left:338px;top:187px;width:55px;height:20px;border:1px solid #D9D9D9"></div>
<div class="n" style="left:338px;top:191px;width:54px;text-align:right;letter-spacing:0.35px">27.305</div>
<div style="position:absolute;left:393px;top:187px;width:55px;height:20px;border:1px solid #D9D9D9"></div>
<div class="n" style="left:393px;top:191px;width:54px;text-align:right;letter-spacing:0.35px">23.906</div>
<div style="position:absolute;left:448px;top:187px;width:55px;height:20px;border:1px solid #D9D9D9"></div>
<div class="n" style="left:448px;top:191px;width:54px;text-align:right;letter-spacing:0.35px">23.555</div>
<div style="position:absolute;left:503px;top:187px;width:55px;height:20px;border:1px solid #D9D9D9"></div>
<div class="n" style="left:503px;top:191px;width:54px;text-align:right;letter-spacing:0.35px">17.930</div>
<div style="position:absolute;left:558px;top:187px;width:55px;height:20px;border:1px solid #D9D9D9"></div>
<div style="position:absolute;left:613px;top:187px;width:55px;height:20px;border:1px solid #D9D9D9"></div>
<div class="n" style="left:613px;top:191px;width:54px;text-align:right;letter-spacing:0.35px">11.250</div>
<div style="position:absolute;left:13px;top:207px;width:49px;height:19px;background:#ECE9D8;border:1px solid #ACA899;box-shadow:inset 1px 1px #fff"></div>
<div class="n" style="left:13px;top:211px;width:46px;text-align:right">2000</div>
<div style="position:absolute;left:63px;top:207px;width:55px;height:20px;border:1px solid #D9D9D9"></div>
<div style="position:absolute;left:118px;top:207px;width:55px;height:20px;border:1px solid #D9D9D9"></div>
<div class="n" style="left:118px;top:211px;width:54px;text-align:right;letter-spacing:0.35px">30.938</div>
<div style="position:absolute;left:173px;top:207px;width:55px;height:20px;border:1px solid #D9D9D9"></div>
<div style="position:absolute;left:228px;top:207px;width:55px;height:20px;border:1px solid #D9D9D9"></div>
<div style="position:absolute;left:283px;top:207px;width:55px;height:20px;border:1px solid #D9D9D9"></div>
<div style="position:absolute;left:338px;top:207px;width:55px;height:20px;border:1px solid #D9D9D9"></div>
<div class="n" style="left:338px;top:211px;width:54px;text-align:right;letter-spacing:0.35px">28.242</div>
<div style="position:absolute;left:393px;top:207px;width:55px;height:20px;border:1px solid #D9D9D9"></div>
<div class="n" style="left:393px;top:211px;width:54px;text-align:right;letter-spacing:0.35px">24.258</div>
<div style="position:absolute;left:448px;top:207px;width:55px;height:20px;border:1px solid #D9D9D9"></div>
<div class="n" style="left:448px;top:211px;width:54px;text-align:right;letter-spacing:0.35px">24.258</div>
<div style="position:absolute;left:503px;top:207px;width:55px;height:20px;border:1px solid #D9D9D9"></div>
<div style="position:absolute;left:558px;top:207px;width:55px;height:20px;border:1px solid #D9D9D9"></div>
<div style="position:absolute;left:613px;top:207px;width:55px;height:20px;border:1px solid #D9D9D9"></div>
<div class="n" style="left:613px;top:211px;width:54px;text-align:right;letter-spacing:0.35px">16.172</div>
<div style="position:absolute;left:13px;top:227px;width:49px;height:19px;background:#ECE9D8;border:1px solid #ACA899;box-shadow:inset 1px 1px #fff"></div>
<div class="n" style="left:13px;top:231px;width:46px;text-align:right">2500</div>
<div style="position:absolute;left:63px;top:227px;width:55px;height:20px;border:1px solid #D9D9D9"></div>
<div style="position:absolute;left:118px;top:227px;width:55px;height:20px;border:1px solid #D9D9D9"></div>
<div class="n" style="left:118px;top:231px;width:54px;text-align:right;letter-spacing:0.35px">45.703</div>
<div style="position:absolute;left:173px;top:227px;width:55px;height:20px;border:1px solid #D9D9D9"></div>
<div style="position:absolute;left:228px;top:227px;width:55px;height:20px;border:1px solid #D9D9D9"></div>
<div style="position:absolute;left:283px;top:227px;width:55px;height:20px;border:1px solid #D9D9D9"></div>
<div class="n" style="left:283px;top:231px;width:54px;text-align:right;letter-spacing:0.35px">31.992</div>
<div style="position:absolute;left:338px;top:227px;width:55px;height:20px;border:1px solid #D9D9D9"></div>
<div class="n" style="left:338px;top:231px;width:54px;text-align:right;letter-spacing:0.35px">29.531</div>
<div style="position:absolute;left:393px;top:227px;width:55px;height:20px;border:1px solid #D9D9D9"></div>
<div class="n" style="left:393px;top:231px;width:54px;text-align:right;letter-spacing:0.35px">27.070</div>
<div style="position:absolute;left:448px;top:227px;width:55px;height:20px;border:1px solid #D9D9D9"></div>
<div class="n" style="left:448px;top:231px;width:54px;text-align:right;letter-spacing:0.35px">22.852</div>
<div style="position:absolute;left:503px;top:227px;width:55px;height:20px;border:1px solid #D9D9D9"></div>
<div style="position:absolute;left:558px;top:227px;width:55px;height:20px;border:1px solid #D9D9D9"></div>
<div style="position:absolute;left:613px;top:227px;width:55px;height:20px;border:1px solid #D9D9D9"></div>
<div class="n" style="left:613px;top:231px;width:54px;text-align:right;letter-spacing:0.35px">17.227</div>
<div style="position:absolute;left:13px;top:247px;width:49px;height:19px;background:#ECE9D8;border:1px solid #ACA899;box-shadow:inset 1px 1px #fff"></div>
<div class="n" style="left:13px;top:251px;width:46px;text-align:right">3000</div>
<div style="position:absolute;left:63px;top:247px;width:55px;height:20px;border:1px solid #D9D9D9"></div>
<div style="position:absolute;left:118px;top:247px;width:55px;height:20px;border:1px solid #D9D9D9"></div>
<div class="n" style="left:118px;top:251px;width:54px;text-align:right;letter-spacing:0.35px">47.109</div>
<div style="position:absolute;left:173px;top:247px;width:55px;height:20px;border:1px solid #D9D9D9"></div>
<div style="position:absolute;left:228px;top:247px;width:55px;height:20px;border:1px solid #D9D9D9"></div>
<div style="position:absolute;left:283px;top:247px;width:55px;height:20px;border:1px solid #D9D9D9"></div>
<div class="n" style="left:283px;top:251px;width:54px;text-align:right;letter-spacing:0.35px">33.750</div>
<div style="position:absolute;left:338px;top:247px;width:55px;height:20px;border:1px solid #D9D9D9"></div>
<div class="n" style="left:338px;top:251px;width:54px;text-align:right;letter-spacing:0.35px">29.883</div>
<div style="position:absolute;left:393px;top:247px;width:55px;height:20px;border:1px solid #D9D9D9"></div>
<div style="position:absolute;left:448px;top:247px;width:55px;height:20px;border:1px solid #D9D9D9;background:#FFFF00"></div>
<div class="n" style="left:448px;top:251px;width:54px;text-align:right;letter-spacing:0.35px">22.852</div>
<div style="position:absolute;left:503px;top:247px;width:55px;height:20px;border:1px solid #D9D9D9"></div>
<div style="position:absolute;left:558px;top:247px;width:55px;height:20px;border:1px solid #D9D9D9"></div>
<div style="position:absolute;left:613px;top:247px;width:55px;height:20px;border:1px solid #D9D9D9"></div>
<div class="n" style="left:613px;top:251px;width:54px;text-align:right;letter-spacing:0.35px">20.039</div>
<div style="position:absolute;left:13px;top:267px;width:49px;height:19px;background:#ECE9D8;border:1px solid #ACA899;box-shadow:inset 1px 1px #fff"></div>
<div class="n" style="left:13px;top:271px;width:46px;text-align:right">3500</div>
<div style="position:absolute;left:63px;top:267px;width:55px;height:20px;border:1px solid #D9D9D9"></div>
<div style="position:absolute;left:118px;top:267px;width:55px;height:20px;border:1px solid #D9D9D9"></div>
<div style="position:absolute;left:173px;top:267px;width:55px;height:20px;border:1px solid #D9D9D9"></div>
<div style="position:absolute;left:228px;top:267px;width:55px;height:20px;border:1px solid #D9D9D9"></div>
<div style="position:absolute;left:283px;top:267px;width:55px;height:20px;border:1px solid #D9D9D9"></div>
<div class="n" style="left:283px;top:271px;width:54px;text-align:right;letter-spacing:0.35px">34.453</div>
<div style="position:absolute;left:338px;top:267px;width:55px;height:20px;border:1px solid #D9D9D9"></div>
<div style="position:absolute;left:393px;top:267px;width:55px;height:20px;border:1px solid #D9D9D9"></div>
<div style="position:absolute;left:448px;top:267px;width:55px;height:20px;border:1px solid #D9D9D9"></div>
<div class="n" style="left:448px;top:271px;width:54px;text-align:right;letter-spacing:0.35px">23.555</div>
<div style="position:absolute;left:503px;top:267px;width:55px;height:20px;border:1px solid #D9D9D9"></div>
<div class="n" style="left:503px;top:271px;width:54px;text-align:right;letter-spacing:0.35px">23.203</div>
<div style="position:absolute;left:558px;top:267px;width:55px;height:20px;border:1px solid #D9D9D9"></div>
<div style="position:absolute;left:613px;top:267px;width:55px;height:20px;border:1px solid #D9D9D9"></div>
<div style="position:absolute;left:13px;top:287px;width:49px;height:19px;background:#ECE9D8;border:1px solid #ACA899;box-shadow:inset 1px 1px #fff"></div>
<div class="n" style="left:13px;top:291px;width:46px;text-align:right">4000</div>
<div style="position:absolute;left:63px;top:287px;width:55px;height:20px;border:1px solid #D9D9D9"></div>
<div style="position:absolute;left:118px;top:287px;width:55px;height:20px;border:1px solid #D9D9D9"></div>
<div class="n" style="left:118px;top:291px;width:54px;text-align:right;letter-spacing:0.35px">49.570</div>
<div style="position:absolute;left:173px;top:287px;width:55px;height:20px;border:1px solid #D9D9D9"></div>
<div style="position:absolute;left:228px;top:287px;width:55px;height:20px;border:1px solid #D9D9D9"></div>
<div style="position:absolute;left:283px;top:287px;width:55px;height:20px;border:1px solid #D9D9D9"></div>
<div class="n" style="left:283px;top:291px;width:54px;text-align:right;letter-spacing:0.35px">35.508</div>
<div style="position:absolute;left:338px;top:287px;width:55px;height:20px;border:1px solid #D9D9D9"></div>
<div class="n" style="left:338px;top:291px;width:54px;text-align:right;letter-spacing:0.35px">34.102</div>
<div style="position:absolute;left:393px;top:287px;width:55px;height:20px;border:1px solid #D9D9D9"></div>
<div style="position:absolute;left:448px;top:287px;width:55px;height:20px;border:1px solid #D9D9D9"></div>
<div class="n" style="left:448px;top:291px;width:54px;text-align:right;letter-spacing:0.35px">25.313</div>
<div style="position:absolute;left:503px;top:287px;width:55px;height:20px;border:1px solid #D9D9D9"></div>
<div class="n" style="left:503px;top:291px;width:54px;text-align:right;letter-spacing:0.35px">26.016</div>
<div style="position:absolute;left:558px;top:287px;width:55px;height:20px;border:1px solid #D9D9D9"></div>
<div class="n" style="left:558px;top:291px;width:54px;text-align:right;letter-spacing:0.35px">23.203</div>
<div style="position:absolute;left:613px;top:287px;width:55px;height:20px;border:1px solid #D9D9D9"></div>
<div class="n" style="left:613px;top:291px;width:54px;text-align:right;letter-spacing:0.35px">23.203</div>
<div style="position:absolute;left:13px;top:307px;width:49px;height:19px;background:#ECE9D8;border:1px solid #ACA899;box-shadow:inset 1px 1px #fff"></div>
<div class="n" style="left:13px;top:311px;width:46px;text-align:right">4500</div>
<div style="position:absolute;left:63px;top:307px;width:55px;height:20px;border:1px solid #D9D9D9"></div>
<div style="position:absolute;left:118px;top:307px;width:55px;height:20px;border:1px solid #D9D9D9"></div>
<div style="position:absolute;left:173px;top:307px;width:55px;height:20px;border:1px solid #D9D9D9"></div>
<div style="position:absolute;left:228px;top:307px;width:55px;height:20px;border:1px solid #D9D9D9"></div>
<div style="position:absolute;left:283px;top:307px;width:55px;height:20px;border:1px solid #D9D9D9"></div>
<div class="n" style="left:283px;top:311px;width:54px;text-align:right;letter-spacing:0.35px">36.211</div>
<div style="position:absolute;left:338px;top:307px;width:55px;height:20px;border:1px solid #D9D9D9"></div>
<div class="n" style="left:338px;top:311px;width:54px;text-align:right;letter-spacing:0.35px">34.102</div>
<div style="position:absolute;left:393px;top:307px;width:55px;height:20px;border:1px solid #D9D9D9"></div>
<div style="position:absolute;left:448px;top:307px;width:55px;height:20px;border:1px solid #D9D9D9"></div>
<div style="position:absolute;left:503px;top:307px;width:55px;height:20px;border:1px solid #D9D9D9"></div>
<div class="n" style="left:503px;top:311px;width:54px;text-align:right;letter-spacing:0.35px">25.664</div>
<div style="position:absolute;left:558px;top:307px;width:55px;height:20px;border:1px solid #D9D9D9"></div>
<div style="position:absolute;left:613px;top:307px;width:55px;height:20px;border:1px solid #D9D9D9"></div>
<div class="n" style="left:613px;top:311px;width:54px;text-align:right;letter-spacing:0.35px">26.367</div>
<div style="position:absolute;left:13px;top:327px;width:49px;height:19px;background:#ECE9D8;border:1px solid #ACA899;box-shadow:inset 1px 1px #fff"></div>
<div class="n" style="left:13px;top:331px;width:46px;text-align:right">5000</div>
<div style="position:absolute;left:63px;top:327px;width:55px;height:20px;border:1px solid #D9D9D9"></div>
<div style="position:absolute;left:118px;top:327px;width:55px;height:20px;border:1px solid #D9D9D9"></div>
<div style="position:absolute;left:173px;top:327px;width:55px;height:20px;border:1px solid #D9D9D9"></div>
<div class="n" style="left:173px;top:331px;width:54px;text-align:right;letter-spacing:0.35px">46.758</div>
<div style="position:absolute;left:228px;top:327px;width:55px;height:20px;border:1px solid #D9D9D9"></div>
<div style="position:absolute;left:283px;top:327px;width:55px;height:20px;border:1px solid #D9D9D9"></div>
<div class="n" style="left:283px;top:331px;width:54px;text-align:right;letter-spacing:0.35px">37.617</div>
<div style="position:absolute;left:338px;top:327px;width:55px;height:20px;border:1px solid #D9D9D9"></div>
<div style="position:absolute;left:393px;top:327px;width:55px;height:20px;border:1px solid #D9D9D9"></div>
<div class="n" style="left:393px;top:331px;width:54px;text-align:right;letter-spacing:0.35px">30.938</div>
<div style="position:absolute;left:448px;top:327px;width:55px;height:20px;border:1px solid #D9D9D9"></div>
<div style="position:absolute;left:503px;top:327px;width:55px;height:20px;border:1px solid #D9D9D9"></div>
<div style="position:absolute;left:558px;top:327px;width:55px;height:20px;border:1px solid #D9D9D9"></div>
<div style="position:absolute;left:613px;top:327px;width:55px;height:20px;border:1px solid #D9D9D9"></div>
<div style="position:absolute;left:13px;top:347px;width:49px;height:19px;background:#ECE9D8;border:1px solid #ACA899;box-shadow:inset 1px 1px #fff"></div>
<div class="n" style="left:13px;top:351px;width:46px;text-align:right">5500</div>
<div style="position:absolute;left:63px;top:347px;width:55px;height:20px;border:1px solid #D9D9D9"></div>
<div style="position:absolute;left:118px;top:347px;width:55px;height:20px;border:1px solid #D9D9D9"></div>
<div style="position:absolute;left:173px;top:347px;width:55px;height:20px;border:1px solid #D9D9D9"></div>
<div style="position:absolute;left:228px;top:347px;width:55px;height:20px;border:1px solid #D9D9D9"></div>
<div class="n" style="left:228px;top:351px;width:54px;text-align:right;letter-spacing:0.35px">37.266</div>
<div style="position:absolute;left:283px;top:347px;width:55px;height:20px;border:1px solid #D9D9D9"></div>
<div style="position:absolute;left:338px;top:347px;width:55px;height:20px;border:1px solid #D9D9D9"></div>
<div class="n" style="left:338px;top:351px;width:54px;text-align:right;letter-spacing:0.35px">33.047</div>
<div style="position:absolute;left:393px;top:347px;width:55px;height:20px;border:1px solid #D9D9D9"></div>
<div class="n" style="left:393px;top:351px;width:54px;text-align:right;letter-spacing:0.35px">31.992</div>
<div style="position:absolute;left:448px;top:347px;width:55px;height:20px;border:1px solid #D9D9D9"></div>
<div style="position:absolute;left:503px;top:347px;width:55px;height:20px;border:1px solid #D9D9D9"></div>
<div class="n" style="left:503px;top:351px;width:54px;text-align:right;letter-spacing:0.35px">27.422</div>
<div style="position:absolute;left:558px;top:347px;width:55px;height:20px;border:1px solid #D9D9D9"></div>
<div style="position:absolute;left:613px;top:347px;width:55px;height:20px;border:1px solid #D9D9D9"></div>
<div class="n" style="left:613px;top:351px;width:54px;text-align:right;letter-spacing:0.35px">26.719</div>
<div style="position:absolute;left:13px;top:367px;width:49px;height:19px;background:#ECE9D8;border:1px solid #ACA899;box-shadow:inset 1px 1px #fff"></div>
<div class="n" style="left:13px;top:371px;width:46px;text-align:right">6000</div>
<div style="position:absolute;left:63px;top:367px;width:55px;height:20px;border:1px solid #D9D9D9"></div>
<div style="position:absolute;left:118px;top:367px;width:55px;height:20px;border:1px solid #D9D9D9"></div>
<div style="position:absolute;left:173px;top:367px;width:55px;height:20px;border:1px solid #D9D9D9"></div>
<div class="n" style="left:173px;top:371px;width:54px;text-align:right;letter-spacing:0.35px">43.242</div>
<div style="position:absolute;left:228px;top:367px;width:55px;height:20px;border:1px solid #D9D9D9"></div>
<div class="n" style="left:228px;top:371px;width:54px;text-align:right;letter-spacing:0.35px">44.297</div>
<div style="position:absolute;left:283px;top:367px;width:55px;height:20px;border:1px solid #D9D9D9"></div>
<div style="position:absolute;left:338px;top:367px;width:55px;height:20px;border:1px solid #D9D9D9"></div>
<div style="position:absolute;left:393px;top:367px;width:55px;height:20px;border:1px solid #D9D9D9"></div>
<div style="position:absolute;left:448px;top:367px;width:55px;height:20px;border:1px solid #D9D9D9"></div>
<div style="position:absolute;left:503px;top:367px;width:55px;height:20px;border:1px solid #D9D9D9"></div>
<div style="position:absolute;left:558px;top:367px;width:55px;height:20px;border:1px solid #D9D9D9"></div>
<div style="position:absolute;left:613px;top:367px;width:55px;height:20px;border:1px solid #D9D9D9"></div>
<div style="position:absolute;left:13px;top:387px;width:49px;height:19px;background:#ECE9D8;border:1px solid #ACA899;box-shadow:inset 1px 1px #fff"></div>
<div class="n" style="left:13px;top:391px;width:46px;text-align:right">6500</div>
<div style="position:absolute;left:63px;top:387px;width:55px;height:20px;border:1px solid #D9D9D9"></div>
<div style="position:absolute;left:118px;top:387px;width:55px;height:20px;border:1px solid #D9D9D9"></div>
<div style="position:absolute;left:173px;top:387px;width:55px;height:20px;border:1px solid #D9D9D9"></div>
<div style="position:absolute;left:228px;top:387px;width:55px;height:20px;border:1px solid #D9D9D9"></div>
<div style="position:absolute;left:283px;top:387px;width:55px;height:20px;border:1px solid #D9D9D9"></div>
<div style="position:absolute;left:338px;top:387px;width:55px;height:20px;border:1px solid #D9D9D9"></div>
<div style="position:absolute;left:393px;top:387px;width:55px;height:20px;border:1px solid #D9D9D9"></div>
<div style="position:absolute;left:448px;top:387px;width:55px;height:20px;border:1px solid #D9D9D9"></div>
<div style="position:absolute;left:503px;top:387px;width:55px;height:20px;border:1px solid #D9D9D9"></div>
<div style="position:absolute;left:558px;top:387px;width:55px;height:20px;border:1px solid #D9D9D9"></div>
<div class="n" style="left:558px;top:391px;width:54px;text-align:right;letter-spacing:0.35px">27.070</div>
<div style="position:absolute;left:613px;top:387px;width:55px;height:20px;border:1px solid #D9D9D9"></div>
<div style="position:absolute;left:248px;top:105px;width:137px;height:119px;background:#fff;border:1px solid #000"></div>
<div style="position:absolute;left:249px;top:106px;width:135px;height:13px;background:#316AC5"></div>
<div class="t" style="left:250px;top:107px;color:#fff">Most Recent Sample</div>
<div class="t" style="left:250px;top:120px;color:#000">History Average</div>
<div class="t" style="left:250px;top:133px;color:#000">History Std Deviation</div>
<div class="t" style="left:250px;top:146px;color:#000">History Sample Count</div>
<div class="t" style="left:250px;top:159px;color:#000">Running Average</div>
<div class="t" style="left:250px;top:172px;color:#000">Running Sample Count</div>
<div class="t" style="left:250px;top:185px;color:#000">Running Minimum</div>
<div class="t" style="left:250px;top:198px;color:#000">Running Maximum</div>
<div class="t" style="left:250px;top:211px;color:#000">Running Range</div>
<div style="position:absolute;left:265px;top:59px;width:381px;height:1px;background:#ACA899"></div>
<div style="position:absolute;left:265px;top:60px;width:381px;height:1px;background:#716F64"></div>
<div style="position:absolute;left:265px;top:61px;width:381px;height:2px;background:#fff"></div>
<svg style="position:absolute;left:258px;top:54px" width="7" height="14" shape-rendering="crispEdges"><rect x="0" y="0" width="6" height="1" fill="#FFFFFF"/><rect x="6" y="0" width="1" height="1" fill="#716F64"/><rect x="0" y="1" width="2" height="1" fill="#FFFFFF"/><rect x="2" y="1" width="1" height="1" fill="#F1EFE2"/><rect x="3" y="1" width="1" height="1" fill="#FFFFFF"/><rect x="4" y="1" width="1" height="1" fill="#F1EFE2"/><rect x="5" y="1" width="1" height="1" fill="#ACA899"/><rect x="6" y="1" width="1" height="1" fill="#716F64"/><rect x="0" y="2" width="1" height="1" fill="#FFFFFF"/><rect x="1" y="2" width="1" height="1" fill="#F1EFE2"/><rect x="2" y="2" width="1" height="1" fill="#FFFFFF"/><rect x="3" y="2" width="1" height="1" fill="#F1EFE2"/><rect x="4" y="2" width="1" height="1" fill="#FFFFFF"/><rect x="5" y="2" width="1" height="1" fill="#ACA899"/><rect x="6" y="2" width="1" height="1" fill="#716F64"/><rect x="0" y="3" width="2" height="1" fill="#FFFFFF"/><rect x="2" y="3" width="1" height="1" fill="#F1EFE2"/><rect x="3" y="3" width="1" height="1" fill="#FFFFFF"/><rect x="4" y="3" width="1" height="1" fill="#F1EFE2"/><rect x="5" y="3" width="1" height="1" fill="#ACA899"/><rect x="6" y="3" width="1" height="1" fill="#716F64"/><rect x="0" y="4" width="1" height="1" fill="#FFFFFF"/><rect x="1" y="4" width="1" height="1" fill="#F1EFE2"/><rect x="2" y="4" width="1" height="1" fill="#FFFFFF"/><rect x="3" y="4" width="1" height="1" fill="#F1EFE2"/><rect x="4" y="4" width="1" height="1" fill="#FFFFFF"/><rect x="5" y="4" width="1" height="1" fill="#ACA899"/><rect x="6" y="4" width="1" height="1" fill="#716F64"/><rect x="0" y="5" width="2" height="1" fill="#FFFFFF"/><rect x="2" y="5" width="1" height="1" fill="#F1EFE2"/><rect x="3" y="5" width="1" height="1" fill="#FFFFFF"/><rect x="4" y="5" width="1" height="1" fill="#F1EFE2"/><rect x="5" y="5" width="1" height="1" fill="#ACA899"/><rect x="6" y="5" width="1" height="1" fill="#716F64"/><rect x="0" y="6" width="1" height="1" fill="#FFFFFF"/><rect x="1" y="6" width="1" height="1" fill="#F1EFE2"/><rect x="2" y="6" width="1" height="1" fill="#FFFFFF"/><rect x="3" y="6" width="1" height="1" fill="#F1EFE2"/><rect x="4" y="6" width="1" height="1" fill="#FFFFFF"/><rect x="5" y="6" width="1" height="1" fill="#ACA899"/><rect x="6" y="6" width="1" height="1" fill="#716F64"/><rect x="0" y="7" width="2" height="1" fill="#FFFFFF"/><rect x="2" y="7" width="1" height="1" fill="#F1EFE2"/><rect x="3" y="7" width="1" height="1" fill="#FFFFFF"/><rect x="4" y="7" width="1" height="1" fill="#F1EFE2"/><rect x="5" y="7" width="1" height="1" fill="#ACA899"/><rect x="6" y="7" width="1" height="1" fill="#716F64"/><rect x="0" y="8" width="1" height="1" fill="#FFFFFF"/><rect x="1" y="8" width="1" height="1" fill="#F1EFE2"/><rect x="2" y="8" width="1" height="1" fill="#FFFFFF"/><rect x="3" y="8" width="1" height="1" fill="#F1EFE2"/><rect x="4" y="8" width="1" height="1" fill="#FFFFFF"/><rect x="5" y="8" width="1" height="1" fill="#ACA899"/><rect x="6" y="8" width="1" height="1" fill="#716F64"/><rect x="0" y="9" width="2" height="1" fill="#FFFFFF"/><rect x="2" y="9" width="1" height="1" fill="#F1EFE2"/><rect x="3" y="9" width="1" height="1" fill="#FFFFFF"/><rect x="4" y="9" width="1" height="1" fill="#F1EFE2"/><rect x="5" y="9" width="1" height="1" fill="#ACA899"/><rect x="6" y="9" width="1" height="1" fill="#716F64"/><rect x="0" y="10" width="1" height="1" fill="#FFFFFF"/><rect x="1" y="10" width="1" height="1" fill="#F1EFE2"/><rect x="2" y="10" width="1" height="1" fill="#FFFFFF"/><rect x="3" y="10" width="1" height="1" fill="#F1EFE2"/><rect x="4" y="10" width="1" height="1" fill="#FFFFFF"/><rect x="5" y="10" width="1" height="1" fill="#ACA899"/><rect x="6" y="10" width="1" height="1" fill="#716F64"/><rect x="0" y="11" width="2" height="1" fill="#FFFFFF"/><rect x="2" y="11" width="1" height="1" fill="#F1EFE2"/><rect x="3" y="11" width="1" height="1" fill="#FFFFFF"/><rect x="4" y="11" width="1" height="1" fill="#F1EFE2"/><rect x="5" y="11" width="1" height="1" fill="#ACA899"/><rect x="6" y="11" width="1" height="1" fill="#716F64"/><rect x="0" y="12" width="1" height="1" fill="#FFFFFF"/><rect x="1" y="12" width="5" height="1" fill="#ACA899"/><rect x="6" y="12" width="1" height="1" fill="#716F64"/><rect x="0" y="13" width="7" height="1" fill="#716F64"/></svg>
<div style="position:absolute;left:4px;top:534px;width:716px;height:1px;background:#ACA899"></div>
<div style="position:absolute;left:4px;top:535px;width:716px;height:1px;background:#716F64"></div>
<div style="position:absolute;left:717px;top:76px;width:1px;height:458px;background:#F1EFE2"></div>
<div style="position:absolute;left:718px;top:76px;width:1px;height:459px;background:#ACA899"></div>
<div style="position:absolute;left:719px;top:76px;width:1px;height:460px;background:#716F64"></div>
<div style="position:absolute;left:4px;top:75px;width:716px;height:1px;background:#fff"></div>
<div style="position:absolute;left:719px;top:30px;width:1px;height:45px;background:#FAF9F2"></div>
<div style="position:absolute;left:6px;top:536px;width:44px;height:19px;background:#ECE9D8;border-left:1px solid #fff;border-right:1px solid #716F64;border-bottom:1px solid #716F64;border-radius:0 0 3px 3px"></div>
<div style="position:absolute;left:7px;top:536px;width:42px;height:18px;border-right:1px solid #ACA899;border-bottom:1px solid #ACA899;border-radius:0 0 2px 2px"></div>
<div class="t" style="left:12px;top:539px;">Output</div>
<div style="position:absolute;left:50px;top:536px;width:42px;height:19px;background:#ECE9D8;border-left:1px solid #fff;border-right:1px solid #716F64;border-bottom:1px solid #716F64;border-radius:0 0 3px 3px"></div>
<div style="position:absolute;left:51px;top:536px;width:40px;height:18px;border-right:1px solid #ACA899;border-bottom:1px solid #ACA899;border-radius:0 0 2px 2px"></div>
<div class="t" style="left:55px;top:539px;">Dash</div>
<div style="position:absolute;left:92px;top:536px;width:55px;height:19px;background:#ECE9D8;border-left:1px solid #fff;border-right:1px solid #716F64;border-bottom:1px solid #716F64;border-radius:0 0 3px 3px"></div>
<div style="position:absolute;left:93px;top:536px;width:53px;height:18px;border-right:1px solid #ACA899;border-bottom:1px solid #ACA899;border-radius:0 0 2px 2px"></div>
<div class="t" style="left:97px;top:539px;">Item Lists</div>
<div style="position:absolute;left:216px;top:536px;width:52px;height:19px;background:#ECE9D8;border-left:1px solid #fff;border-right:1px solid #716F64;border-bottom:1px solid #716F64;border-radius:0 0 3px 3px"></div>
<div style="position:absolute;left:217px;top:536px;width:50px;height:18px;border-right:1px solid #ACA899;border-bottom:1px solid #ACA899;border-radius:0 0 2px 2px"></div>
<div class="t" style="left:220px;top:539px;">Monitors</div>
<div style="position:absolute;left:147px;top:534px;width:69px;height:2px;background:#ECE9D8"></div>
<div style="position:absolute;left:147px;top:534px;width:69px;height:23px;background:#ECE9D8;border-left:1px solid #fff;border-right:1px solid #716F64;border-bottom:1px solid #716F64;border-radius:0 0 3px 3px"></div>
<div style="position:absolute;left:148px;top:534px;width:67px;height:22px;border-right:1px solid #ACA899;border-bottom:1px solid #ACA899;border-radius:0 0 2px 2px"></div>
<div class="t" style="left:154px;top:541px;">Histograms</div>
<div style="position:absolute;left:4px;top:559px;width:130px;height:18px;border-right:1px solid #fff;border-bottom:1px solid #fff"></div>
<div style="position:absolute;left:136px;top:559px;width:128px;height:18px;border-top:1px solid #ACA899;border-left:1px solid #ACA899;border-right:1px solid #fff;border-bottom:1px solid #fff"></div>
<div style="position:absolute;left:266px;top:559px;width:128px;height:18px;border-top:1px solid #ACA899;border-left:1px solid #ACA899;border-right:1px solid #fff;border-bottom:1px solid #fff"></div>
<div style="position:absolute;left:396px;top:559px;width:324px;height:18px;border-top:1px solid #ACA899;border-left:1px solid #ACA899;border-right:1px solid #fff;border-bottom:1px solid #fff"></div>
<div style="position:absolute;left:5px;top:560px;width:128px;height:16px;background:#0000FF;border:1px solid #000"></div>
<div class="t" style="left:5px;top:561px;width:128px;text-align:center;color:#fff;letter-spacing:-0.1px">ALDL: Connected</div>
<div class="t" style="left:157px;top:561px;">8.90 Hz</div>
<div class="t" style="left:203px;top:561px;">Errors: 0</div>
<svg style="position:absolute;left:707px;top:564px" width="12" height="12" shape-rendering="crispEdges"><rect x="11" y="0" width="1" height="1" fill="#FFFFFF"/><rect x="10" y="1" width="1" height="1" fill="#FFFFFF"/><rect x="11" y="1" width="1" height="1" fill="#ACA899"/><rect x="9" y="2" width="1" height="1" fill="#FFFFFF"/><rect x="10" y="2" width="2" height="1" fill="#ACA899"/><rect x="8" y="3" width="1" height="1" fill="#FFFFFF"/><rect x="9" y="3" width="2" height="1" fill="#ACA899"/><rect x="7" y="4" width="1" height="1" fill="#FFFFFF"/><rect x="8" y="4" width="2" height="1" fill="#ACA899"/><rect x="11" y="4" width="1" height="1" fill="#FFFFFF"/><rect x="6" y="5" width="1" height="1" fill="#FFFFFF"/><rect x="7" y="5" width="2" height="1" fill="#ACA899"/><rect x="10" y="5" width="1" height="1" fill="#FFFFFF"/><rect x="11" y="5" width="1" height="1" fill="#ACA899"/><rect x="5" y="6" width="1" height="1" fill="#FFFFFF"/><rect x="6" y="6" width="2" height="1" fill="#ACA899"/><rect x="9" y="6" width="1" height="1" fill="#FFFFFF"/><rect x="10" y="6" width="2" height="1" fill="#ACA899"/><rect x="4" y="7" width="1" height="1" fill="#FFFFFF"/><rect x="5" y="7" width="2" height="1" fill="#ACA899"/><rect x="8" y="7" width="1" height="1" fill="#FFFFFF"/><rect x="9" y="7" width="2" height="1" fill="#ACA899"/><rect x="3" y="8" width="1" height="1" fill="#FFFFFF"/><rect x="4" y="8" width="2" height="1" fill="#ACA899"/><rect x="7" y="8" width="1" height="1" fill="#FFFFFF"/><rect x="8" y="8" width="2" height="1" fill="#ACA899"/><rect x="11" y="8" width="1" height="1" fill="#FFFFFF"/><rect x="2" y="9" width="1" height="1" fill="#FFFFFF"/><rect x="3" y="9" width="2" height="1" fill="#ACA899"/><rect x="6" y="9" width="1" height="1" fill="#FFFFFF"/><rect x="7" y="9" width="2" height="1" fill="#ACA899"/><rect x="10" y="9" width="1" height="1" fill="#FFFFFF"/><rect x="11" y="9" width="1" height="1" fill="#ACA899"/><rect x="1" y="10" width="1" height="1" fill="#FFFFFF"/><rect x="2" y="10" width="2" height="1" fill="#ACA899"/><rect x="5" y="10" width="1" height="1" fill="#FFFFFF"/><rect x="6" y="10" width="2" height="1" fill="#ACA899"/><rect x="9" y="10" width="1" height="1" fill="#FFFFFF"/><rect x="10" y="10" width="2" height="1" fill="#ACA899"/><rect x="0" y="11" width="1" height="1" fill="#FFFFFF"/><rect x="1" y="11" width="2" height="1" fill="#ACA899"/><rect x="4" y="11" width="1" height="1" fill="#FFFFFF"/><rect x="5" y="11" width="2" height="1" fill="#ACA899"/><rect x="8" y="11" width="1" height="1" fill="#FFFFFF"/><rect x="9" y="11" width="2" height="1" fill="#ACA899"/></svg>
</body></html>
